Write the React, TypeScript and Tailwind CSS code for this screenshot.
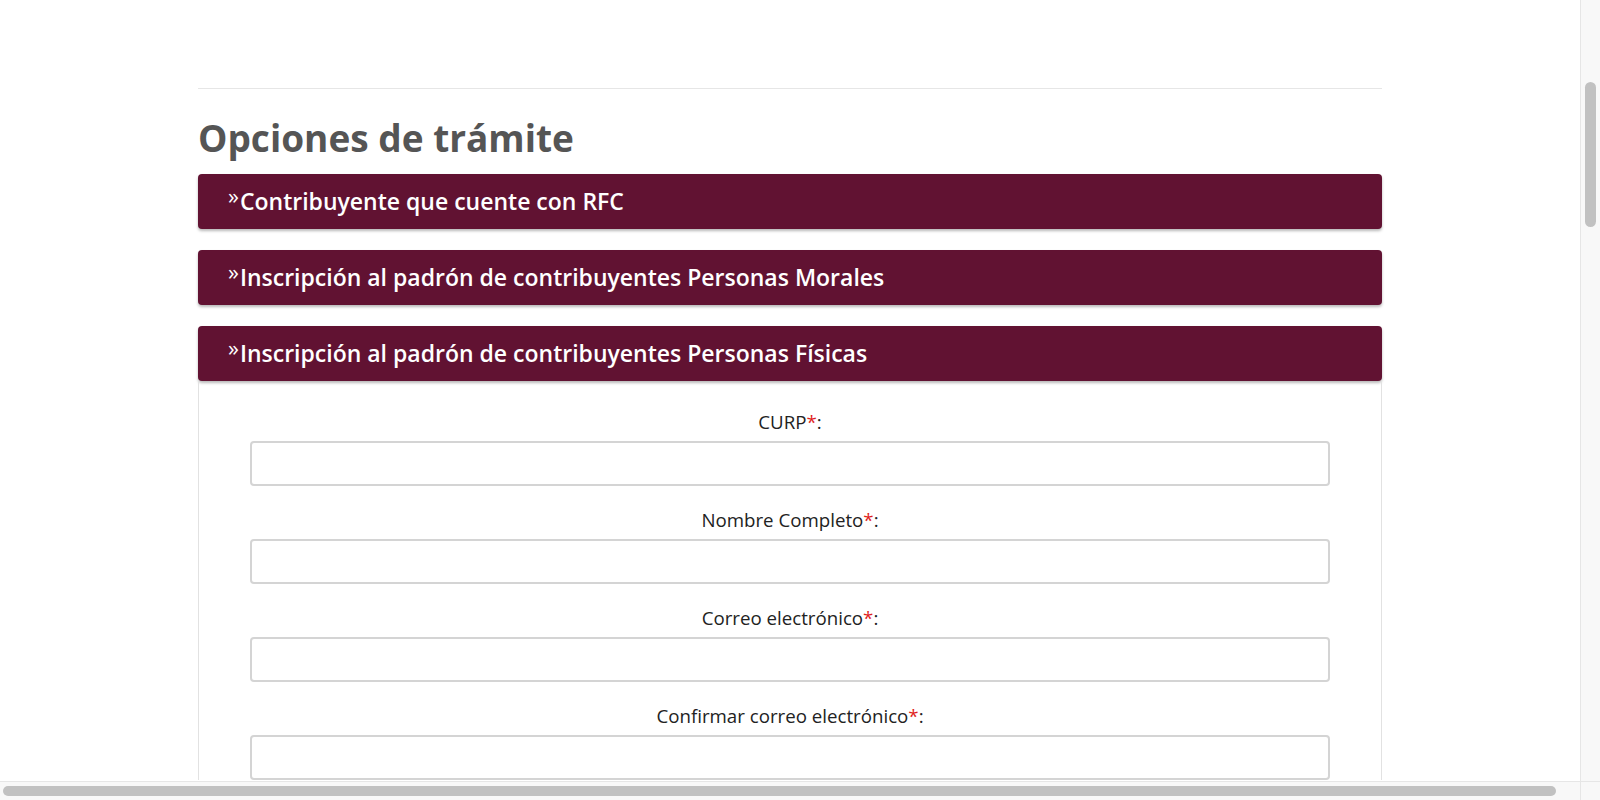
import React from "react"

// secciones del acordeón
const opciones = [
  "Contribuyente que cuente con RFC",
  "Inscripción al padrón de contribuyentes Personas Morales",
  "Inscripción al padrón de contribuyentes Personas Físicas",
]

// campos del formulario de personas físicas
const campos = ["CURP", "Nombre Completo", "Correo electrónico", "Confirmar correo electrónico"]

function Barra({ titulo }: { titulo: string }) {
  return (
    <div className="h-[55px] rounded-[4px] bg-[#611232] pl-[30px] text-[23px] font-semibold leading-[55px] text-white shadow-[0_2px_3px_rgba(0,0,0,0.28)]">
      <span className="relative -top-[6px] mr-[1px] text-[22px] font-normal">»</span>
      {titulo}
    </div>
  )
}

function Campo({ etiqueta }: { etiqueta: string }) {
  return (
    <div className="mb-[22px]">
      <label className="mb-[7px] block text-center text-[18.7px] leading-[24px] text-[#222]">
        {etiqueta}
        <span className="text-[#e01e1e]">*</span>:
      </label>
      <input
        type="text"
        className="block h-[45px] w-full rounded-[4px] border-2 border-[#d4d4d4] bg-white outline-none"
      />
    </div>
  )
}

export default function App() {
  return (
    <div
      className="relative flex h-[800px] w-[1600px] flex-col overflow-hidden bg-white"
      style={{ fontFamily: '"Open Sans", "Noto Sans", sans-serif' }}
    >
      <div className="flex min-h-0 flex-1">
        <main className="min-w-0 flex-1 overflow-hidden">
          <div className="mx-auto w-[1184px] pt-[88px]">
            <div className="border-t border-[#e6e6e6]" />
            <h2 className="mt-[28px] mb-[15px] text-[37px] font-bold leading-[42px] text-[#555]">
              Opciones de trámite
            </h2>
            <div className="flex flex-col gap-[21px]">
              <Barra titulo={opciones[0]} />
              <Barra titulo={opciones[1]} />
              <div>
                <Barra titulo={opciones[2]} />
                <div className="border-x border-[#e2e2e2] px-[51px] pt-[29px]">
                  {campos.map((c) => (
                    <Campo key={c} etiqueta={c} />
                  ))}
                </div>
              </div>
            </div>
          </div>
        </main>
        {/* barra de desplazamiento vertical */}
        <div className="w-[20px] shrink-0 border-l border-[#e6e6e6] bg-[#f8f8f8] pt-[82px] pl-[4px]">
          <div className="h-[145px] w-[11px] rounded-full bg-[#c1c1c1]" />
        </div>
      </div>
      {/* barra de desplazamiento horizontal */}
      <div className="flex h-[19px] shrink-0 border-t border-[#e6e6e6] bg-[#f8f8f8]">
        <div className="flex flex-1 items-center pl-[3px]">
          <div className="h-[10px] w-[1553px] rounded-full bg-[#c1c1c1]" />
        </div>
        <div className="w-[20px] border-l border-[#e6e6e6]" />
      </div>
    </div>
  )
}
